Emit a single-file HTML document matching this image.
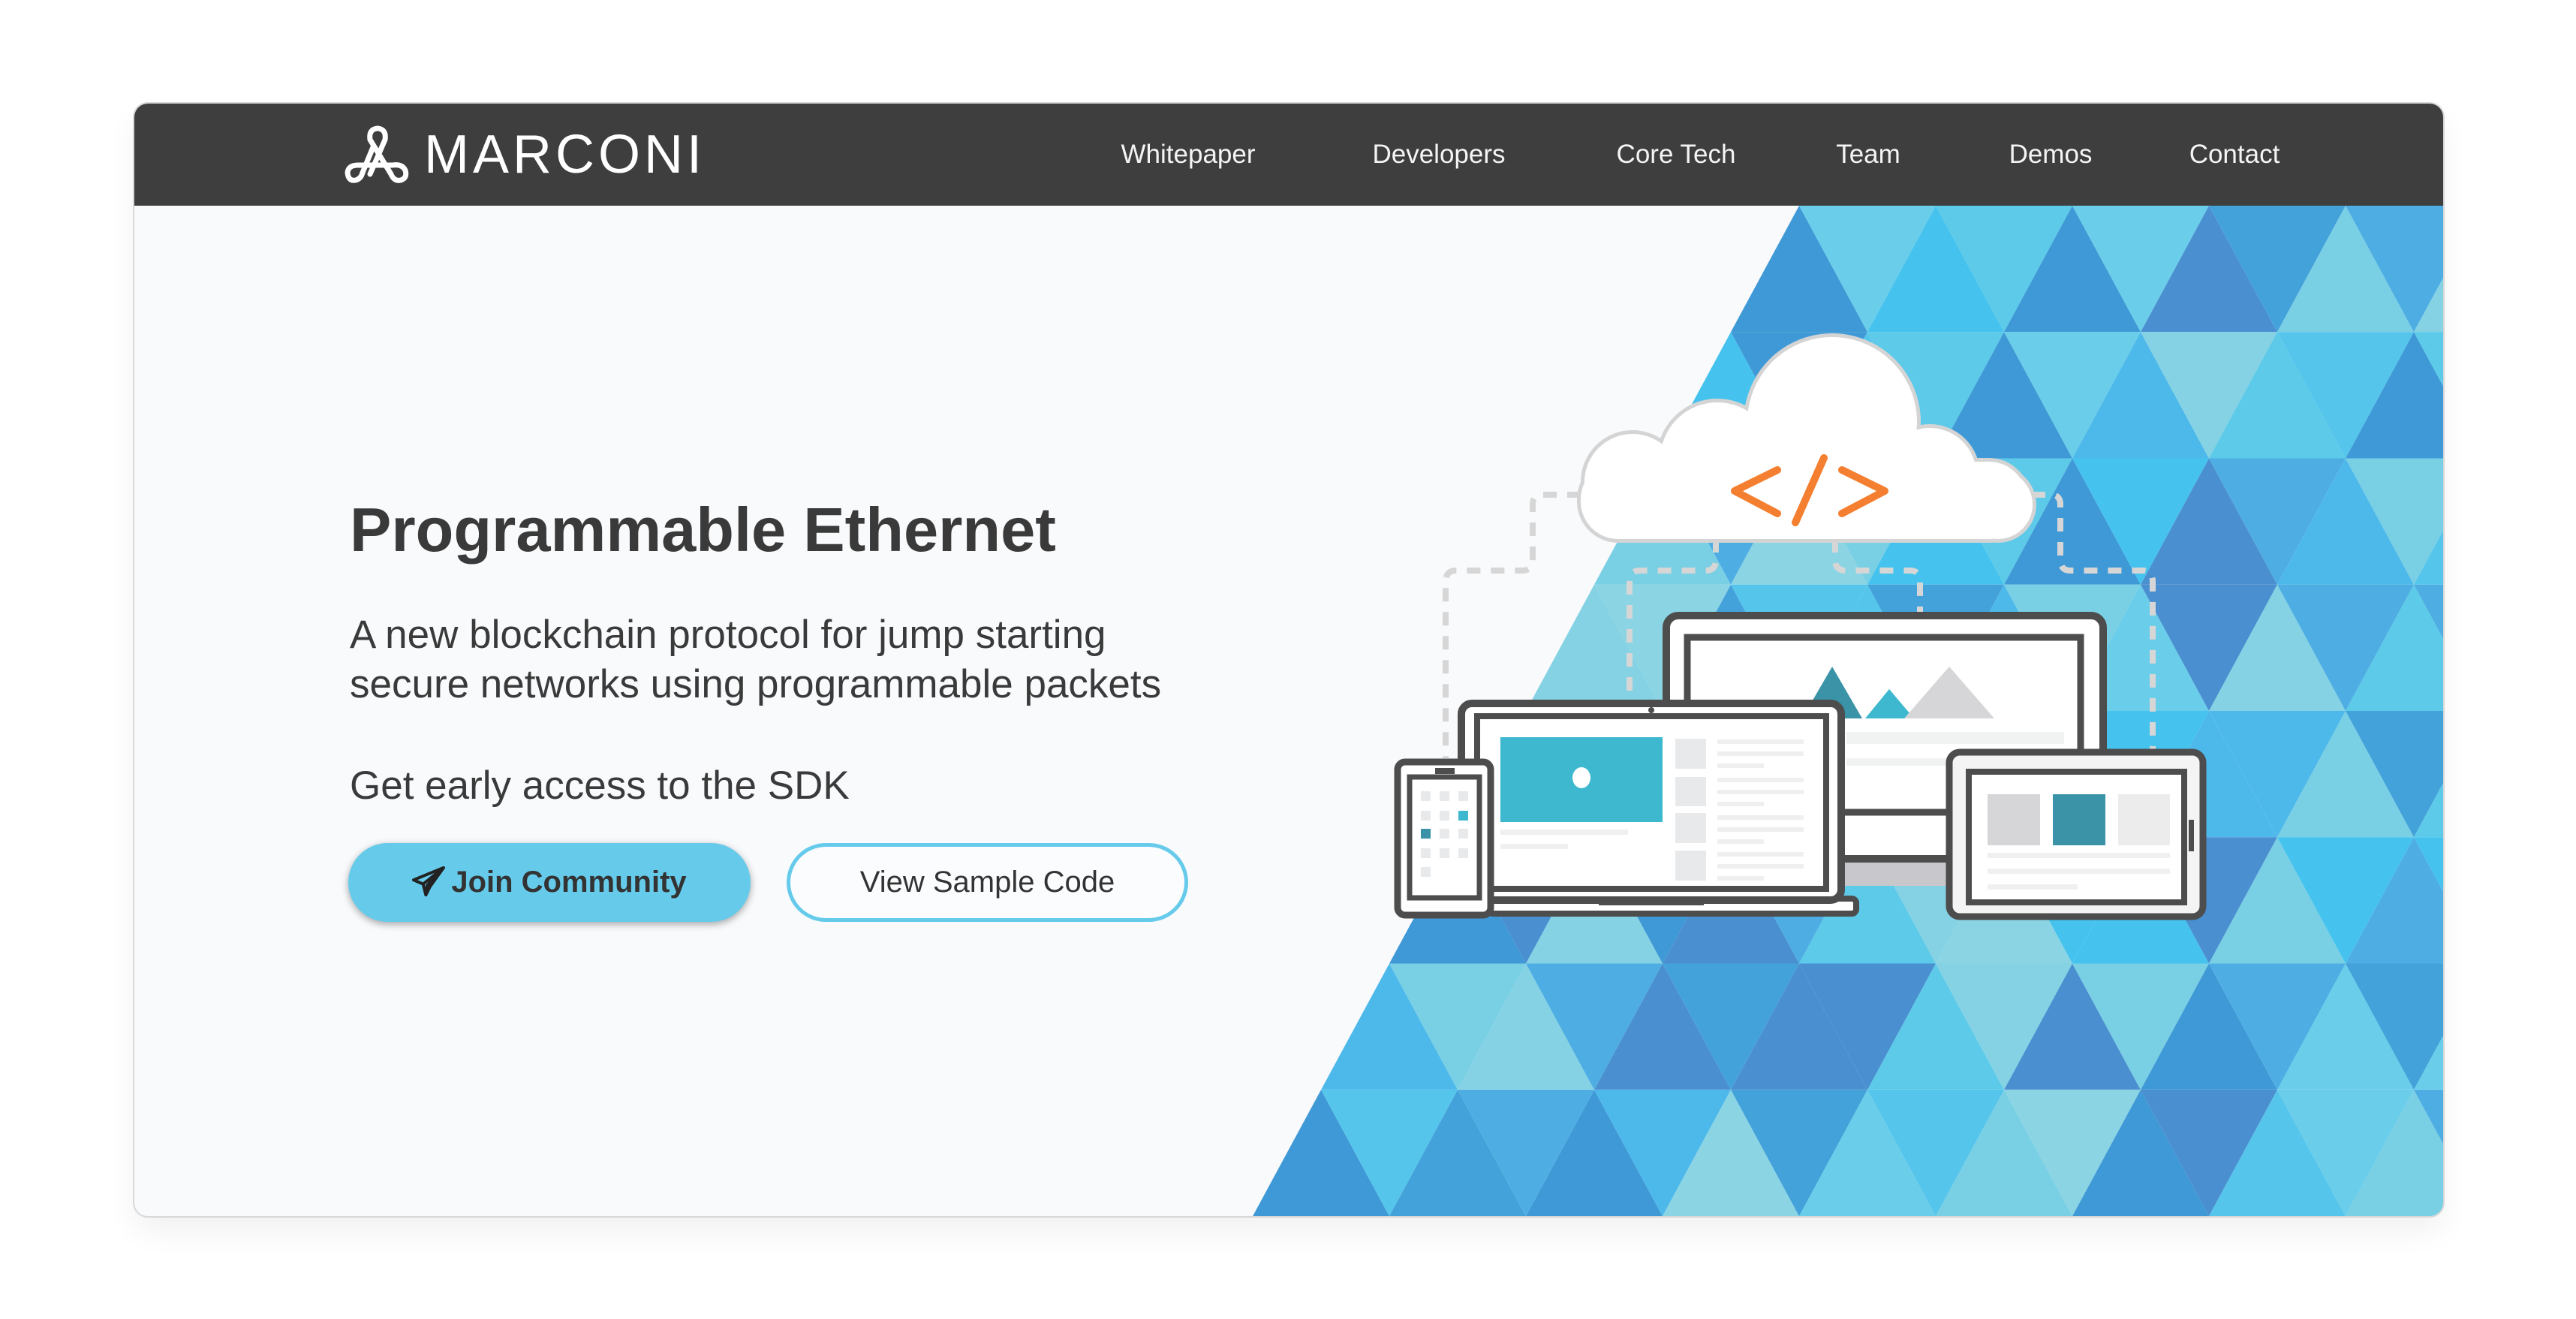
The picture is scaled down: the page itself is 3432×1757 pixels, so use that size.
<!DOCTYPE html>
<html><head><meta charset="utf-8">
<style>
html,body{margin:0;padding:0;background:#fff;width:3432px;height:1757px;overflow:hidden;font-family:"Liberation Sans",sans-serif}
.win{position:absolute;left:179px;top:138px;width:3076px;height:1482px;border-radius:18px;background:#f8fafc;overflow:hidden;box-shadow:0 0 0 2px #d8d8d8,0 20px 40px rgba(0,0,0,0.06)}
.hdr{position:absolute;left:0;top:0;width:100%;height:136px;background:#3d3e3d}
.nav{position:absolute;top:0;height:136px;line-height:136px;color:#f4f4f4;font-size:35px;transform:translateX(-50%);white-space:nowrap}
.logo{position:absolute;left:386px;top:30px;color:#fff;font-size:72px;letter-spacing:5px;line-height:76px}
h1{position:absolute;left:287px;top:520px;margin:0;font-size:83px;font-weight:bold;color:#3a3a3a;white-space:nowrap}
.sub{position:absolute;left:287px;top:675px;font-size:53px;color:#3a3a3a;line-height:66px;white-space:nowrap}
.sdk{position:absolute;left:287px;top:878px;font-size:53px;color:#3a3a3a;white-space:nowrap}
.b1{position:absolute;left:285px;top:985px;width:536px;height:105px;border-radius:53px;background:#66cbeb;box-shadow:0 3px 10px rgba(0,0,0,0.35);color:#333;font-weight:bold;font-size:40px;line-height:105px;text-align:center}
.b2{position:absolute;left:869px;top:985px;width:525px;height:95px;border-radius:53px;border:5px solid #66cbeb;background:#fafcfe;color:#333;font-size:40px;line-height:95px;text-align:center}
</style></head><body>
<div class="win">
<svg id="tri" width="3076" height="1482" style="position:absolute;left:0;top:0"></svg>
<div class="hdr"></div>
<svg style="position:absolute;left:280px;top:28px" width="90" height="80" viewBox="466 166 90 80">
<g fill="none" stroke="#fff" stroke-width="7" stroke-linecap="round">
<path d="M500 232 L520 186 Q522 172 510 171 Q498 172 500 186 L528 232 Q532 242 541 240 Q550 237 547 227 Q543 218 530 220 L484 220 Q471 220 470 230 Q471 242 481 240 Q488 238 490 230 L504 196"/>
</g></svg>
<div class="logo">MARCONI</div>
<div class="nav" style="left:1404px">Whitepaper</div>
<div class="nav" style="left:1738px">Developers</div>
<div class="nav" style="left:2054px">Core Tech</div>
<div class="nav" style="left:2310px">Team</div>
<div class="nav" style="left:2553px">Demos</div>
<div class="nav" style="left:2798px">Contact</div>
<h1>Programmable Ethernet</h1>
<div class="sub">A new blockchain protocol for jump starting<br>secure networks using programmable packets</div>
<div class="sdk">Get early access to the SDK</div>
<div class="b1"><svg width="44" height="40" viewBox="0 0 24 22" style="vertical-align:-6px;margin-right:8px"><path d="M23 1 L1 10 L8 13 L10 21 L13 15 L23 1 Z M8 13 L23 1 M10 21 L11 14 L23 1" fill="none" stroke="#222" stroke-width="2.2" stroke-linejoin="round"/></svg>Join Community</div>
<div class="b2">View Sample Code</div>
</div>
<svg style="position:absolute;left:0;top:0" width="3432" height="1757" viewBox="0 0 3432 1757">
<g fill="none" stroke="#d6d6d6" stroke-width="8" stroke-dasharray="18 14">
<path d="M2106 659 H2055 Q2042 659 2042 672 V745 Q2042 760 2028 760 H1940 Q1926 760 1926 775 V1010"/>
<path d="M2286 718 V746 Q2286 760 2272 760 H2185 Q2171 760 2171 775 V940"/>
<path d="M2445 718 V746 Q2445 760 2459 760 H2545 Q2558 760 2558 775 V818"/>
<path d="M2707 659 H2732 Q2745 659 2745 672 V745 Q2745 760 2758 760 H2855 Q2868 760 2868 775 V1002"/>
</g>
<g stroke="#d4d4d4" stroke-width="10" fill="#fff">
<rect x="2106" y="615" width="594" height="103" rx="50"/><ellipse cx="2441" cy="562" rx="113" ry="113"/><circle cx="2288" cy="612" r="76"/><circle cx="2175" cy="642" r="64"/><circle cx="2571" cy="632" r="62"/><circle cx="2662" cy="672" r="46"/>
</g>
<g fill="#fff">
<rect x="2106" y="615" width="594" height="103" rx="50"/><ellipse cx="2441" cy="562" rx="113" ry="113"/><circle cx="2288" cy="612" r="76"/><circle cx="2175" cy="642" r="64"/><circle cx="2571" cy="632" r="62"/><circle cx="2662" cy="672" r="46"/>
</g>
<g fill="none" stroke="#f47f30" stroke-width="10" stroke-linecap="round" stroke-linejoin="round">
<path d="M2368 626 L2311 654 L2368 684"/><path d="M2430 610 L2392 696"/><path d="M2454 626 L2511 654 L2454 684"/>
</g>
<rect x="2250" y="1140" width="520" height="40" fill="#c8c8cc"/>
<rect x="2220" y="820" width="582" height="324" rx="16" fill="#fff" stroke="#4d4d4d" stroke-width="10"/>
<rect x="2248" y="849" width="524" height="233" fill="#fff" stroke="#4d4d4d" stroke-width="9"/>
<polygon points="2401,957 2441,888 2481,957" fill="#3a93a6"/>
<polygon points="2485,957 2517,918 2550,957" fill="#3db8cf"/>
<polygon points="2537,957 2597,888 2657,957" fill="#d6d6d8"/>
<rect x="2460" y="975" width="290" height="16" fill="#f1f2f2"/>
<rect x="2460" y="1010" width="150" height="10" fill="#f1f2f2"/>
<rect x="1984" y="1197" width="489" height="20" rx="6" fill="#fff" stroke="#4d4d4d" stroke-width="8"/>
<rect x="2130" y="1198" width="140" height="8" fill="#4d4d4d"/>
<rect x="1947" y="937" width="506" height="262" rx="14" fill="#fff" stroke="#4d4d4d" stroke-width="10"/>
<rect x="1968" y="954" width="465" height="230" fill="#fff" stroke="#4d4d4d" stroke-width="8"/>
<circle cx="2200" cy="946" r="4" fill="#4d4d4d"/>
<rect x="1999" y="982" width="216" height="113" fill="#3db8cf"/>
<ellipse cx="2107" cy="1036" rx="12" ry="14" fill="#fff"/>
<rect x="1999" y="1105" width="170" height="7" fill="#f0f0f0"/><rect x="1999" y="1124" width="90" height="7" fill="#f0f0f0"/>
<g fill="#e8e9eb"><rect x="2232" y="984" width="41" height="40"/><rect x="2232" y="1035" width="41" height="39"/><rect x="2232" y="1083" width="41" height="40"/><rect x="2232" y="1133" width="41" height="40"/></g>
<g fill="#efefef"><rect x="2288" y="985" width="115" height="6"/><rect x="2288" y="1001" width="115" height="6"/><rect x="2288" y="1017" width="62" height="6"/><rect x="2288" y="1036" width="115" height="6"/><rect x="2288" y="1052" width="115" height="6"/><rect x="2288" y="1068" width="62" height="6"/><rect x="2288" y="1086" width="115" height="6"/><rect x="2288" y="1102" width="115" height="6"/><rect x="2288" y="1118" width="62" height="6"/><rect x="2288" y="1135" width="115" height="6"/><rect x="2288" y="1151" width="115" height="6"/><rect x="2288" y="1167" width="62" height="6"/></g>
<rect x="1862" y="1015" width="124" height="204" rx="10" fill="#fff" stroke="#4d4d4d" stroke-width="9"/>
<rect x="1878" y="1035" width="93" height="161" fill="#fff" stroke="#4d4d4d" stroke-width="7"/>
<rect x="1912" y="1023" width="26" height="8" fill="#4d4d4d"/>
<g fill="#e8e9eb"><rect x="1893" y="1054" width="13" height="13"/><rect x="1918" y="1054" width="13" height="13"/><rect x="1943" y="1054" width="13" height="13"/><rect x="1893" y="1080" width="13" height="13"/><rect x="1918" y="1080" width="13" height="13"/><rect x="1918" y="1104" width="13" height="13"/><rect x="1943" y="1104" width="13" height="13"/><rect x="1893" y="1130" width="13" height="13"/><rect x="1918" y="1130" width="13" height="13"/><rect x="1943" y="1130" width="13" height="13"/><rect x="1893" y="1155" width="13" height="13"/></g>
<rect x="1943" y="1080" width="13" height="13" fill="#3db8cf"/><rect x="1893" y="1104" width="13" height="13" fill="#3a93a6"/>
<rect x="2597" y="1002" width="338" height="219" rx="14" fill="#f4f4f4" stroke="#4d4d4d" stroke-width="9"/>
<rect x="2623" y="1028" width="287" height="174" fill="#fff" stroke="#4d4d4d" stroke-width="8"/>
<rect x="2648" y="1058" width="70" height="68" fill="#d6d6d8"/><rect x="2735" y="1058" width="70" height="68" fill="#3a93a6"/><rect x="2822" y="1058" width="69" height="68" fill="#ececec"/>
<rect x="2648" y="1136" width="243" height="7" fill="#f0f0f0"/><rect x="2648" y="1157" width="243" height="7" fill="#f0f0f0"/><rect x="2648" y="1178" width="120" height="7" fill="#f0f0f0"/>
<rect x="2916" y="1092" width="7" height="42" fill="#4d4d4d"/>
</svg>
<script>
(function(){
var s=document.getElementById('tri'),ox=179,oy=138;
var pal=['#4a8fd0','#45c3ee','#5ccae8','#84d2e4','#4eaee3','#3f99d6','#6acde9','#79cfe4','#4db9ea','#8ad4e4','#44a2da','#55c5ec'];
var h=168.25,w=182,out='',seed=7;
function rnd(){seed=(seed*9301+49297)%233280;return seed/233280;}
for(var r=0;r<8;r++){
 var y0=274+r*h-oy,y1=y0+h,tx=2397-91*r-ox,bx=tx-91;
 for(var j=0;j<12;j++){
  var t=tx+w*j,b=bx+w*j;
  out+='<polygon points="'+b+','+y1+' '+(b+w)+','+y1+' '+t+','+y0+'" fill="'+pal[Math.floor(rnd()*pal.length)]+'"/>';
  out+='<polygon points="'+t+','+y0+' '+(t+w)+','+y0+' '+(b+w)+','+y1+'" fill="'+pal[Math.floor(rnd()*pal.length)]+'"/>';
 }
}
s.innerHTML=out;
})();
</script>
</body></html>
